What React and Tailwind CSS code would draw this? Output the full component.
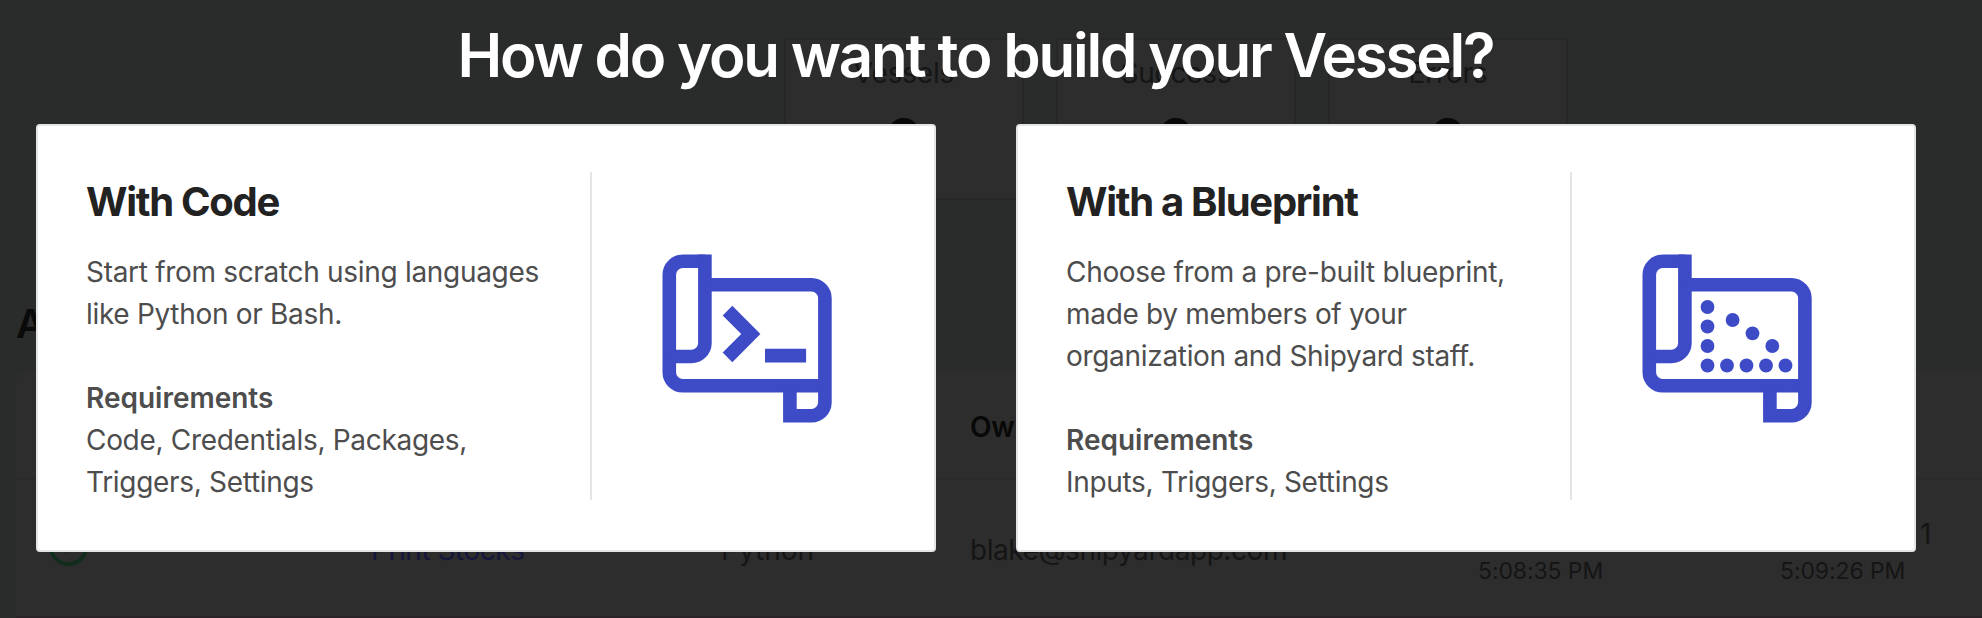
const stats = ["Vessels", "Success", "Errors"];

function Stat({ label }) {
  return (
    <div className="flex h-[162px] w-60 flex-col items-center border-2 border-[#272727] bg-[#2d2d2d] pt-3">
      <span className="text-[28px] leading-[42px] tracking-[-0.2px] text-[#151515]">{label}</span>
      <span className="mt-4 text-[56px] leading-[60px] font-bold text-[#080808]">0</span>
    </div>
  );
}

function Dashboard() {
  return (
    <div className="flex h-full flex-col pt-[38px]">
      <div className="flex gap-8 pl-[784px]">
        {stats.map((s) => (
          <Stat key={s} label={s} />
        ))}
      </div>
      <div className="mt-[94px] pl-4 text-[40px] leading-[60px] font-semibold text-[#0a0a0a]">A</div>
      <div className="mt-[18px] ml-4 h-[246px] rounded-tl-lg border-b-2 border-[#2a2429] bg-[#2d2d2d]">
        <div className="flex h-[108px] items-center border-b-2 border-[#292929] pl-[954px]">
          <span className="pt-1 text-[28px] leading-[42px] font-semibold tracking-[-0.3px] text-[#080808]">Ow</span>
        </div>
        <div className="flex h-[136px] items-start text-[28px] leading-[42px] tracking-[-0.45px] text-[#151515]">
          <div className="w-[355px] pt-[47px] pl-[33px]">
            <svg width="39" height="39" viewBox="0 0 39 39" fill="none" stroke="#0f2d1a" strokeWidth="3.6">
              <circle cx="19.5" cy="19.5" r="17.6" />
              <path d="M11.5 18l6 6L28 13" />
            </svg>
          </div>
          <div className="w-[350px] pt-[49px] text-[#15163a]">Print Stocks</div>
          <div className="w-[249px] pt-[49px] tracking-normal">Python</div>
          <div className="w-[508px] pt-[49px]">blake@shipyardapp.com</div>
          <div className="w-[302px] pt-[74px] text-[23px] leading-[34px] tracking-[-0.1px]">5:08:35 PM</div>
          <div className="w-[140px] pt-[74px] text-[23px] leading-[34px] tracking-[-0.1px]">5:09:26 PM</div>
          <div className="pt-[33px]">1</div>
        </div>
      </div>
    </div>
  );
}

function BlueprintIcon({ children }) {
  return (
    <svg width="170" height="170" viewBox="-0.5 -0.5 170 170" fill="none" stroke="#3d4bc7" strokeWidth="13.6">
      <path d="M43 6.8H20.3A13.5 13.5 0 0 0 6.8 20.3V118A13.5 13.5 0 0 0 20.3 131.3H162.5" />
      <path d="M43 0V89A13.5 13.5 0 0 1 29.5 102H7" transform="translate(-0.6 0)" />
      <path d="M43 30.3H149A13.5 13.5 0 0 1 162.4 43.8V148A13.5 13.5 0 0 1 149 161.2H127.4V131" />
      {children}
    </svg>
  );
}

function CodeIcon() {
  return (
    <BlueprintIcon>
      <path d="M65 56.1L88.3 79.5L65 102.9" />
      <path d="M102.5 101.1H143.6" />
    </BlueprintIcon>
  );
}

const dots = [
  [65, 52.5], [65, 72], [65, 91.5], [65, 111],
  [84.5, 111], [104, 111], [123.5, 111], [143, 111],
  [90.1, 65.5], [110, 78.8], [129.8, 91.5],
];

function DotsIcon() {
  return (
    <BlueprintIcon>
      {dots.map(([x, y]) => (
        <circle key={`${x}-${y}`} cx={x} cy={y} r="6.9" fill="#3d4bc7" stroke="none" />
      ))}
    </BlueprintIcon>
  );
}

function OptionCard({ title, lines, requirements, icon }) {
  return (
    <div className="flex h-[428px] w-[900px] rounded border-2 border-[#e4e5e5] bg-white pt-[46px] pb-[50px] pl-12">
      <div className="flex w-[506px] flex-col border-r-2 border-[#e4e5e5]">
        <h2 className="text-[40px] leading-[60px] font-[650] tracking-[-1.3px] text-[#222222]">{title}</h2>
        <div className="mt-[19px] text-[28px] leading-[42px] tracking-[-0.31px] whitespace-nowrap text-[#4d4d4d]">
          {lines.map((l) => (
            <p key={l}>{l}</p>
          ))}
          <p className="mt-[42px] font-semibold tracking-normal">Requirements</p>
          {requirements.map((l) => (
            <p key={l}>{l}</p>
          ))}
        </div>
      </div>
      <div className="flex flex-1 items-start pt-[82px] pl-[70px]">{icon}</div>
    </div>
  );
}

export default function App() {
  return (
    <div className="relative h-[618px] w-[1982px] overflow-hidden bg-[#2a2c2b] font-['Inter',sans-serif]">
      <Dashboard />
      <div className="absolute inset-0 pl-9">
        <h1 className="flex h-[124px] w-[1879px] items-center justify-center pb-[15px] text-[60px] leading-none font-semibold tracking-[-2.2px] whitespace-nowrap text-white">
          How do you want to build your Vessel?
        </h1>
        <div className="flex gap-20">
          <OptionCard
            title="With Code"
            lines={["Start from scratch using languages", "like Python or Bash."]}
            requirements={["Code, Credentials, Packages,", "Triggers, Settings"]}
            icon={<CodeIcon />}
          />
          <OptionCard
            title="With a Blueprint"
            lines={["Choose from a pre-built blueprint,", "made by members of your", "organization and Shipyard staff."]}
            requirements={["Inputs, Triggers, Settings"]}
            icon={<DotsIcon />}
          />
        </div>
      </div>
    </div>
  );
}
